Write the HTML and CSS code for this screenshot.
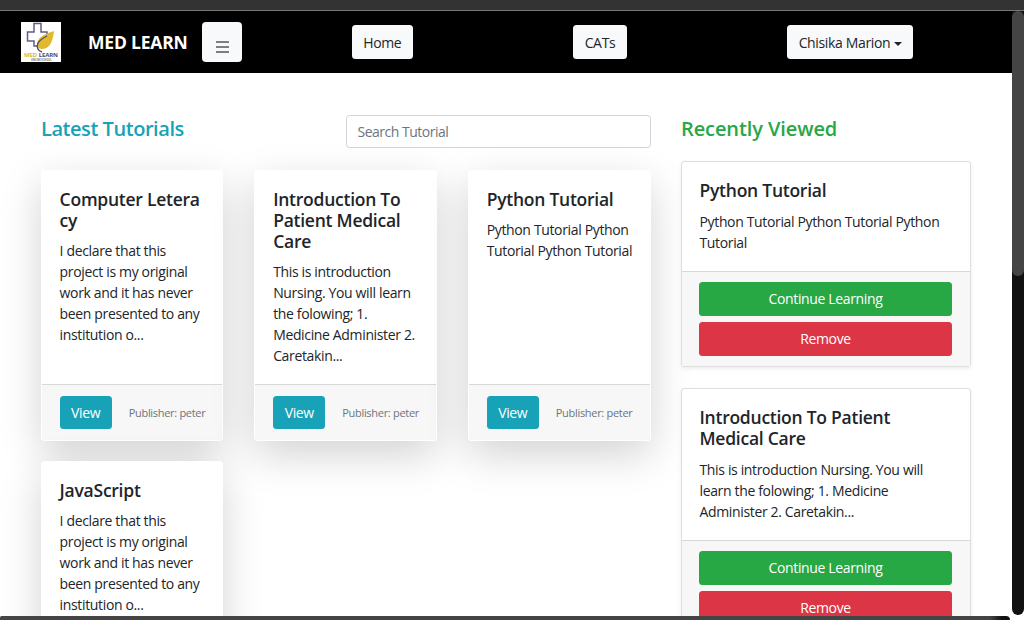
FILE: index.html
```html
<!DOCTYPE html>
<html lang="en">
<head>
<meta charset="utf-8">
<title>Med Learn</title>
<link rel="stylesheet" href="styles.css">
</head>
<body>
<div class="chrome-top"></div>
<div class="window">
  <div class="page">
    <nav class="navbar">
      <a class="logo" href="#">
        <svg viewBox="0 0 40 40" width="40" height="40" aria-hidden="true">
          <rect width="40" height="40" fill="#fff"/>
          <path d="M20 19h6v-9h-6V1.500h-7V10H6.500v9H13v5h3" fill="none" stroke="#5f5f8a" stroke-width="1.500"/>
          <path d="M16 24c-1-8 7-12 17-15-1 8-3 17-11 18-3 .3-5-1-6-3z" fill="#e0b92c"/>
          <path d="M21 30c-4-1-6-5-4-9 2-3 5-5 9-7" fill="none" stroke="#4a4a78" stroke-width="1.300"/>
          <text x="3" y="35" class="logo-text"><tspan fill="#e0b92c">MED</tspan> <tspan fill="#4a4a78">LEARN</tspan></text>
          <text x="10" y="39" class="logo-sub">ONLINE SCHOOL</text>
        </svg>
      </a>
      <a class="brand" href="#">MED LEARN</a>
      <button class="toggler" type="button" aria-label="Toggle menu">
        <svg viewBox="0 0 13 12" width="13" height="12" aria-hidden="true"><path d="M0 1h13M0 6h13M0 11h13" stroke="#555" stroke-width="1.300"/></svg>
      </button>
      <div class="nav-links">
        <a class="btn btn-light" href="#">Home</a>
        <a class="btn btn-light" href="#">CATs</a>
        <a class="btn btn-light" href="#">Chisika Marion<span class="caret"></span></a>
      </div>
    </nav>
    <main class="content">
      <section class="tutorials">
        <header class="tutorials-head">
          <h4 class="heading heading-info">Latest Tutorials</h4>
          <input class="search" type="text" placeholder="Search Tutorial">
        </header>
        <div class="tutorial-grid">
          <article class="card shadow-card">
            <div class="card-body">
              <h5 class="card-title">Computer Letera<br>cy</h5>
              <p class="card-text">I declare that this project is my original work and it has never been presented to any institution o...</p>
            </div>
            <div class="card-footer row-footer"><a class="btn btn-info" href="#">View</a><small class="publisher">Publisher: peter</small></div>
          </article>
          <article class="card shadow-card">
            <div class="card-body">
              <h5 class="card-title">Introduction To Patient Medical Care</h5>
              <p class="card-text">This is introduction Nursing. You will learn the folowing; 1. Medicine Administer 2. Caretakin...</p>
            </div>
            <div class="card-footer row-footer"><a class="btn btn-info" href="#">View</a><small class="publisher">Publisher: peter</small></div>
          </article>
          <article class="card shadow-card">
            <div class="card-body">
              <h5 class="card-title">Python Tutorial</h5>
              <p class="card-text">Python Tutorial Python Tutorial Python Tutorial</p>
            </div>
            <div class="card-footer row-footer"><a class="btn btn-info" href="#">View</a><small class="publisher">Publisher: peter</small></div>
          </article>
          <article class="card shadow-card">
            <div class="card-body">
              <h5 class="card-title">JavaScript</h5>
              <p class="card-text">I declare that this project is my original work and it has never been presented to any institution o...</p>
            </div>
            <div class="card-footer row-footer"><a class="btn btn-info" href="#">View</a><small class="publisher">Publisher: peter</small></div>
          </article>
        </div>
      </section>
      <aside class="recent">
        <h4 class="heading heading-success">Recently Viewed</h4>
        <article class="card recent-card">
          <div class="card-body">
            <h5 class="card-title">Python Tutorial</h5>
            <p class="card-text">Python Tutorial Python Tutorial Python Tutorial</p>
          </div>
          <div class="card-footer stack-footer"><a class="btn btn-success" href="#">Continue Learning</a><a class="btn btn-danger" href="#">Remove</a></div>
        </article>
        <article class="card recent-card">
          <div class="card-body">
            <h5 class="card-title">Introduction To Patient Medical Care</h5>
            <p class="card-text">This is introduction Nursing. You will learn the folowing; 1. Medicine Administer 2. Caretakin...</p>
          </div>
          <div class="card-footer stack-footer"><a class="btn btn-success" href="#">Continue Learning</a><a class="btn btn-danger" href="#">Remove</a></div>
        </article>
      </aside>
    </main>
  </div>
  <div class="scrollbar"><div class="thumb"></div></div>
</div>
<div class="chrome-bottom"></div>
</body>
</html>
```
FILE: styles.css
```css
* { box-sizing: border-box; }
html, body { margin: 0; height: 620px; overflow: hidden; }
body {
  display: flex;
  flex-direction: column;
  position: relative;
  background: #fff;
  color: #212529;
  font-family: "Open Sans", "Noto Sans", sans-serif;
  font-size: 14px;
  line-height: 21px;
  letter-spacing: -0.35px;
}
a { text-decoration: none; color: inherit; }
.chrome-top { height: 11px; flex: none; background: #333; border-bottom: 1px solid #777; }
.window { flex: 1; display: flex; min-height: 0; }
.page { flex: 1; min-width: 0; background: #fff; overflow: hidden; }
.scrollbar { width: 12px; flex: none; margin-bottom: 5px; background: #111; border-radius: 0 0 6px 6px; }
.thumb { height: 265px; background: #444; border-radius: 6px; }
.chrome-bottom {
  position: absolute; left: 0; right: 14px; bottom: 0; height: 4px;
  background: linear-gradient(to right, #444 990px, #111 1002px);
  border-radius: 4px 10px 0 0;
}
.navbar { height: 62px; background: #000; display: flex; align-items: center; padding: 0 18.500px 0 21px; }
.logo { display: block; width: 40px; height: 40px; flex: none; }
.logo svg { display: block; }
.logo-text { font-size: 6px; font-weight: 700; letter-spacing: -.1px; }
.logo-sub { font-size: 2.500px; font-weight: 700; letter-spacing: 0; fill: #777; }
.brand { margin-left: 27px; width: 100px; flex: none; color: #fff; font-size: 17.500px; font-weight: 700; letter-spacing: -.2px; white-space: nowrap; }
.toggler {
  margin-left: 14px; width: 40px; height: 40px; padding: 9px 0 0; flex: none;
  background: #f8f9fa; border: 0; border-radius: 4px;
  display: flex; align-items: center; justify-content: center;
}
.toggler svg { display: block; }
.nav-links { flex: 1; margin-left: 29.500px; display: flex; justify-content: space-around; align-items: center; }
.btn {
  display: inline-block; padding: 5.250px 10.500px; border: 1px solid transparent; border-radius: 3.500px;
  font-size: 14px; line-height: 21px; text-align: center; white-space: nowrap;
}
.btn-light { background: #f8f9fa; color: #212529; }
.btn-info { background: #17a2b8; color: #fff; }
.btn-success { background: #28a745; color: #fff; }
.btn-danger { background: #dc3545; color: #fff; }
.caret {
  display: inline-block; margin-left: 3.500px; vertical-align: 2px;
  border-top: 4px solid; border-left: 4px solid transparent; border-right: 4px solid transparent;
}
.content { display: flex; gap: 30px; padding: 42px 41px 0; }
.tutorials { width: 610px; flex: none; }
.recent { width: 290px; flex: none; }
.tutorials-head { display: flex; justify-content: space-between; align-items: flex-start; margin-bottom: 22px; }
.heading { margin: 0; padding-top: 1px; font-size: 20px; line-height: 25px; font-weight: 600; }
.heading-info { color: #17a2b8; letter-spacing: -.45px; }
.heading-success { color: #28a745; margin-bottom: 20px; letter-spacing: -.1px; }
.search {
  width: 305px; height: 33px; padding: 5px 10.500px;
  border: 1px solid #ced4da; border-radius: 3.500px; background: #fff;
  font: inherit; letter-spacing: -.5px; color: #495057;
}
.search::placeholder { color: #6c757d; opacity: 1; }
.tutorial-grid { display: grid; grid-template-columns: repeat(3, 182.850px); column-gap: 30.700px; row-gap: 20.500px; margin-left: -.4px; }
.card { display: flex; flex-direction: column; background: #fff; border: 1px solid rgba(0,0,0,.125); border-radius: 3.500px; }
.shadow-card { border-color: transparent; box-shadow: 0 14px 42px rgba(0,0,0,.175); }
.card-body { flex: 1; padding: 17.500px; }
.shadow-card .card-body { padding: 17.500px 17px 18px 18px; }
.card-title { margin: 0 0 10.500px; font-size: 17.500px; line-height: 21px; font-weight: 600; letter-spacing: -.25px; }
.shadow-card .card-title { margin-bottom: 9.500px; }
.card-text { margin: 0; }
.card-footer { background: #f7f7f7; border-top: 1px solid rgba(0,0,0,.125); }
.row-footer { display: flex; align-items: center; justify-content: space-between; padding: 10.500px 17px 10.500px 18px; }
.publisher { font-size: 11px; color: #6c757d; letter-spacing: -.3px; }
.stack-footer { display: flex; flex-direction: column; gap: 6.500px; padding: 10.500px 18px 10.500px 17px; }
.recent-card { margin-bottom: 21px; box-shadow: 0 2px 4px rgba(0,0,0,.075); }
```
